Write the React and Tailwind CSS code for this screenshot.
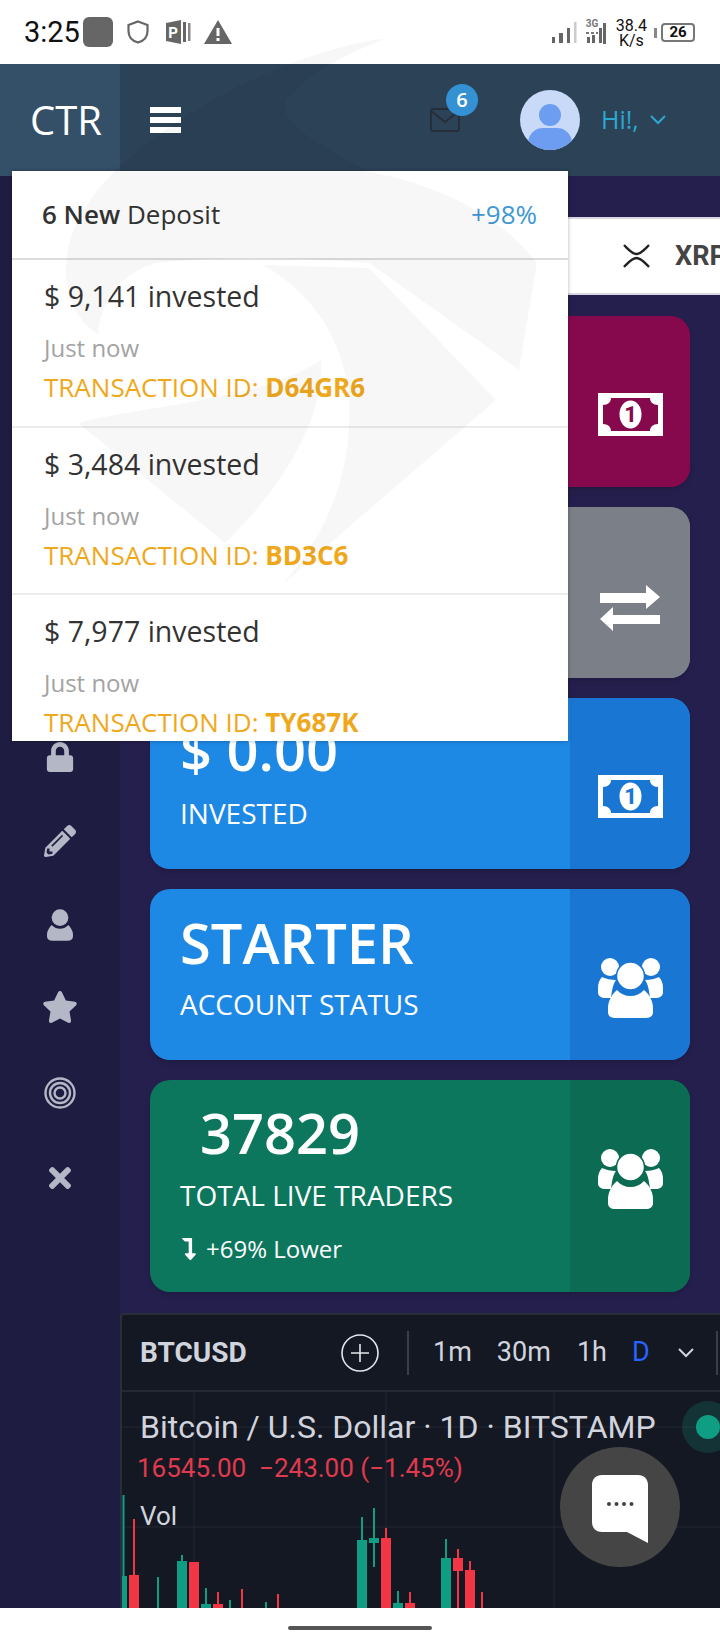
import React from 'react';
import { FaLock, FaPencilAlt, FaStar, FaTimes, FaLevelDownAlt } from 'react-icons/fa';

const openSans = "font-['Open_Sans',sans-serif]";
const roboto = "font-['Roboto',sans-serif]";

// Banknote with a centred "1", cut out in the panel colour
function Money({ fill }) {
  return (
    <svg width="65" height="43" viewBox="0 0 65 43">
      <rect width="65" height="43" fill="#fff" />
      <path d="M13 5H52C52 9 55 12 60 12V31C55 31 52 34 52 38H13C13 34 10 31 5 31V12C10 12 13 9 13 5Z" fill={fill} />
      <ellipse cx="32.5" cy="21.5" rx="11" ry="14" fill="#fff" />
      <text x="32.5" y="29" textAnchor="middle" fontSize="22" fontWeight="800" fontFamily="Roboto, sans-serif" fill={fill}>1</text>
    </svg>
  );
}

// Two opposed arrows for the exchange tile
function Exchange() {
  return (
    <svg width="60" height="46" viewBox="0 0 60 46" fill="#fff">
      <path d="M0 8H46V0L60 12L46 24V18H0Z" />
      <path d="M60 30V39H13V46L0 34L13 22V30Z" />
    </svg>
  );
}

// Group of three people, the front one outlined to stand off from the others
function Users({ fill }) {
  return (
    <svg width="65" height="60" viewBox="0 0 65 60" fill="#fff">
      <circle cx="12" cy="9" r="9" />
      <circle cx="53" cy="9" r="9" />
      <path d="M4 19C1 22 0 26 0 30V34C0 38 3 40 8 40H13C14 32 15 26 18 22C13 22 8 21 4 19Z" />
      <path d="M61 19C64 22 65 26 65 30V34C65 38 62 40 57 40H52C51 32 50 26 47 22C52 22 57 21 61 19Z" />
      <circle cx="32.5" cy="18" r="14" stroke={fill} strokeWidth="1.5" />
      <path d="M19 32C13 37 10 44 10 50V54C10 58 13 60 17 60H48C52 60 55 58 55 54V50C55 44 52 37 46 32C42 36 38 38 32.5 38S23 36 19 32Z" />
    </svg>
  );
}

function StatCard({ bg, panel, h, iconTop, children, icon }) {
  return (
    <div className={`flex w-[540px] ${h} ${bg} rounded-[20px] overflow-hidden shadow-md shrink-0`}>
      <div className={`w-[420px] shrink-0 relative text-white ${openSans}`}>{children}</div>
      <div className={`flex-1 flex justify-center ${panel} ${iconTop}`}>{icon}</div>
    </div>
  );
}

const deposits = [
  { amount: '$ 9,141 invested', id: 'D64GR6' },
  { amount: '$ 3,484 invested', id: 'BD3C6' },
  { amount: '$ 7,977 invested', id: 'TY687K' },
];

// Volume-style candles: [x, width, top of body, top of wick, colour, bottom of body, bottom of wick]
const G = '#0f9e83';
const R = '#f23645';
const candles = [
  [120, 7, 1576, 1495, G], [129, 10, 1575, 1519, R], [157, 0, 1577, 1577, G],
  [177, 10, 1561, 1555, G], [189, 10, 1562, 1562, R], [201, 10, 1604, 1588, G],
  [213, 10, 1604, 1592, R], [229, 0, 1600, 1600, G], [241, 0, 1589, 1589, R],
  [265, 0, 1602, 1602, G], [277, 0, 1594, 1594, R], [357, 10, 1540, 1517, G],
  [369, 10, 1538, 1508, G, 1543, 1567], [381, 10, 1538, 1528, R], [393, 10, 1603, 1591, G],
  [405, 10, 1603, 1592, R], [441, 10, 1558, 1539, G], [453, 10, 1558, 1549, R, 1571, 1608],
  [465, 10, 1570, 1561, R], [481, 0, 1592, 1592, R],
];

function ChartPlot() {
  return (
    <svg className="absolute inset-0" width="598" height="216" viewBox="122 1392 598 216">
      <g stroke="#232733" strokeWidth="1">
        <path d="M194 1392V1608M386 1392V1608M554 1392V1608M122 1427H720M122 1527H720" />
      </g>
      {candles.map(([x, w, top, wick, color, bodyEnd = 1608, wickEnd], i) =>
        w === 0 ? (
          <rect key={i} x={x} y={top} width="2" height={1608 - top} fill={color} />
        ) : (
          <g key={i} fill={color}>
            <rect x={x + w / 2 - 1} y={wick} width="2" height={(wickEnd ?? bodyEnd) - wick} />
            <rect x={x} y={top} width={w} height={bodyEnd - top} />
          </g>
        )
      )}
    </svg>
  );
}

function StatusBar() {
  return (
    <div className="h-16 shrink-0 bg-white flex items-center relative">
      <span className={`${roboto} text-[29px] leading-none text-[#111] ml-[24px]`}>3:25</span>
      <div className="w-[30px] h-[30px] rounded-[6px] bg-[#666] ml-[3px]" />
      <svg className="ml-[14px]" width="22" height="24" viewBox="0 0 22 24" fill="none" stroke="#666" strokeWidth="2.2">
        <path d="M11 1.5L20.5 5V11C20.5 17 16.5 21 11 22.5C5.500 21 1.500 17 1.500 11V5Z" />
      </svg>
      <svg className="ml-[17px]" width="25" height="24" viewBox="0 0 25 24">
        <path d="M0 3L15 0V24L0 21Z" fill="#666" />
        <rect x="17" y="2" width="3" height="20" fill="#666" />
        <rect x="22" y="3" width="2.5" height="18" fill="#888" />
        <text x="7" y="18" textAnchor="middle" fontSize="15" fontWeight="700" fontFamily="Roboto, sans-serif" fill="#fff">P</text>
      </svg>
      <svg className="ml-[13px]" width="28" height="24" viewBox="0 0 28 24">
        <path d="M14 0L28 24H0Z" fill="#666" />
        <rect x="12.5" y="8" width="3" height="8" fill="#fff" />
        <rect x="12.5" y="18" width="3" height="3" fill="#fff" />
      </svg>
      <div className="ml-auto flex items-end h-[30px] mr-[25px]">
        <svg width="52" height="28" viewBox="0 0 52 28" className="mb-[3px]">
          <g fill="#666">
            <rect x="2" y="21" width="3" height="6" />
            <rect x="9" y="17" width="4" height="10" />
            <rect x="17" y="12" width="3" height="15" />
          </g>
          <rect x="24" y="6" width="2.5" height="21" fill="#ccc" />
          <text x="42" y="11" textAnchor="middle" fontSize="10" fontWeight="700" fontFamily="Roboto, sans-serif" fill="#777">3G</text>
          <path d="M36 17H48" stroke="#777" strokeWidth="2" strokeDasharray="3 2" />
          <g fill="#666">
            <rect x="37" y="21" width="3" height="6" />
            <rect x="42" y="19" width="3" height="8" />
            <rect x="49" y="12" width="3" height="15" />
          </g>
        </svg>
        <div className="w-[3px] h-[21px] bg-[#666] mb-[3px] mr-[10px] ml-[1px]" />
        <div className={`${roboto} text-[16px] leading-[15px] text-[#111] text-center mb-[-1px]`}>
          <div>38.4</div>
          <div>K/s</div>
        </div>
        <div className="w-[3px] h-[10px] bg-[#888] ml-[7px] mb-[9px]" />
        <div className={`${roboto} w-[34px] h-[19px] border-2 border-[#777] rounded-[4px] ml-[4px] mb-[5px] flex items-center justify-center text-[15px] font-bold text-[#111] leading-none`}>
          26
        </div>
      </div>
    </div>
  );
}

function Header() {
  return (
    <div className="h-28 shrink-0 flex bg-[#2c4257]">
      <div className={`w-[120px] bg-[#344f68] flex items-center justify-center pl-[12px] text-white text-[40px] ${openSans}`}>CTR</div>
      <div className="flex-1 flex items-center">
        <div className="ml-[30px] w-[31px] flex flex-col gap-[4px]">
          <div className="h-[6px] bg-white" />
          <div className="h-[6px] bg-white" />
          <div className="h-[6px] bg-white" />
        </div>
        <div className="ml-[249px] relative w-[30px] h-[24px]">
          <svg width="30" height="24" viewBox="0 0 30 24" fill="none" stroke="#262e3a" strokeWidth="2">
            <rect x="1" y="1" width="28" height="22" rx="2" />
            <path d="M1 3L15 14L29 3" />
          </svg>
          <div className={`absolute left-[16px] top-[-24px] w-8 h-8 rounded-full bg-[#3391d4] text-white font-semibold text-[20px] flex items-center justify-center ${openSans}`}>6</div>
        </div>
        <div className="ml-[60px] w-[60px] h-[60px] rounded-full bg-[#c9d9f8] overflow-hidden relative flex justify-center">
          <div className="w-[22px] h-[22px] rounded-full bg-[#6d9df0] mt-[14px]" />
          <div className="absolute top-[38px] w-[44px] h-[30px] rounded-full bg-[#6d9df0]" />
        </div>
        <span className={`ml-[21px] text-[25px] text-[#2ba8d0] ${openSans}`}>Hi!,</span>
        <svg className="ml-[11px]" width="16" height="10" viewBox="0 0 16 10" fill="none" stroke="#2ba8d0" strokeWidth="2">
          <path d="M1 1L8 8L15 1" />
        </svg>
      </div>
    </div>
  );
}

function Sidebar() {
  return (
    <div className="w-[120px] shrink-0 bg-[#1f1c41] flex flex-col items-center text-[#b4b8c6] pt-[565px]">
      <div className="h-[32px] flex items-center"><FaLock size={30} /></div>
      <div className="h-[32px] mt-[52px] flex items-center"><FaPencilAlt size={32} /></div>
      <div className="h-[32px] mt-[52px] flex items-center">
        <svg width="26" height="32" viewBox="0 0 28 34" fill="currentColor">
          <circle cx="14" cy="9" r="9" />
          <path d="M5 17C2 20 0 24 0 27V29C0 32 2 34 6 34H22C26 34 28 32 28 29V27C28 24 26 20 23 17C20 20 17 21 14 21S8 20 5 17Z" />
        </svg>
      </div>
      <div className="h-[32px] mt-[50px] flex items-center"><FaStar size={36} /></div>
      <div className="h-[32px] mt-[54px] flex items-center">
        <svg width="32" height="32" viewBox="0 0 32 32" fill="none" stroke="currentColor" strokeWidth="2.4">
          <circle cx="16" cy="16" r="14.500" />
          <circle cx="16" cy="16" r="10" />
          <circle cx="16" cy="16" r="5.500" />
        </svg>
      </div>
      <div className="h-[32px] mt-[53px] flex items-center"><FaTimes size={32} /></div>
    </div>
  );
}

function Ticker() {
  return (
    <div className={`ml-[30px] h-[78px] shrink-0 bg-white border-y-2 border-[#d9d8e2] flex items-center overflow-hidden ${roboto}`}>
      <svg className="ml-[473px] shrink-0" width="27" height="24" viewBox="0 0 27 24" fill="none" stroke="#222" strokeWidth="2.4">
        <path d="M1 1C6 6 9 10 13.500 10S21 6 26 1M1 23C6 18 9 14 13.500 14S21 18 26 23" />
      </svg>
      <span className="ml-[25px] text-[27px] font-bold text-[#444] whitespace-nowrap">XRP</span>
    </div>
  );
}

function Chart() {
  return (
    <div className={`h-full bg-[#141823] border-t-2 border-l-2 border-[#2a2e39] rounded-tl-[4px] flex flex-col ${roboto}`}>
      <div className="h-[77px] shrink-0 border-b-2 border-[#242833] flex items-center text-[27px] text-[#d1d4dc]">
        <span className="ml-[18px] w-[201px] font-bold text-[28px]">BTCUSD</span>
        <svg width="38" height="38" viewBox="0 0 38 38" fill="none" stroke="#e3e5eb" strokeWidth="1.6">
          <circle cx="19" cy="19" r="18" />
          <path d="M19 10V28M10 19H28" />
        </svg>
        <div className="w-[2px] h-[44px] bg-[#3a3e49] ml-[28px]" />
        <span className="ml-[24px]">1m</span>
        <span className="ml-[25px]">30m</span>
        <span className="ml-[26px]">1h</span>
        <span className="ml-[25px] text-[#2962ff]">D</span>
        <svg className="ml-[28px]" width="16" height="10" viewBox="0 0 16 10" fill="none" stroke="#d1d4dc" strokeWidth="2">
          <path d="M1 1L8 8L15 1" />
        </svg>
        <div className="w-[2px] h-[44px] bg-[#3a3e49] ml-[22px]" />
      </div>
      <div className="flex-1 relative overflow-hidden">
        <ChartPlot />
        <div className="absolute left-[18px] top-[16px] text-[32px] leading-[38px] text-[#d1d4dc] whitespace-nowrap">Bitcoin / U.S. Dollar · 1D · BITSTAMP</div>
        <div className="absolute left-[15px] top-[60px] text-[26px] leading-[32px] text-[#e03a4e] whitespace-nowrap">16545.00&nbsp; −243.00 (−1.45%)</div>
        <div className="absolute left-[18px] top-[108px] text-[26px] leading-[32px] text-[#d1d4dc]">Vol</div>
        <div className="absolute left-[560px] top-[9px] w-[52px] h-[52px] rounded-full bg-[#0f9e83]/20 flex items-center justify-center">
          <div className="w-[24px] h-[24px] rounded-full bg-[#0f9e83]" />
        </div>
      </div>
    </div>
  );
}

function DepositMenu() {
  return (
    <div className={`absolute left-3 top-[171px] w-[556px] h-[570px] bg-white overflow-hidden shadow-[0_0_4px_rgba(0,0,0,0.3)] ${openSans}`}>
      <div className="h-[89px] border-b-2 border-[#dcdcdc] flex items-center justify-between pl-[30px] pr-[31px] text-[26px] text-[#333]">
        <span><b className="font-semibold">6 New</b> Deposit</span>
        <span className="text-[#3f97d3]">+98%</span>
      </div>
      {deposits.map((d, i) => (
        <div key={d.id} className={`h-[167.5px] pl-[32px] pt-[16px] ${i < 2 ? 'border-b-2 border-[#ececec]' : ''}`}>
          <div className="text-[28.5px] leading-[40px] font-medium text-[#333]">{d.amount}</div>
          <div className="text-[24px] leading-[34px] mt-[15px] text-[#a3a3a3]">Just now</div>
          <div className="text-[26px] leading-[38px] mt-[3px] text-[#efa81c] whitespace-nowrap">
            TRANSACTION ID: <b className="font-bold">{d.id}</b>
          </div>
        </div>
      ))}
    </div>
  );
}

// Faint brand mark laid over the page
function Watermark() {
  return (
    <svg className="absolute inset-0 pointer-events-none" width="720" height="760" viewBox="0 0 720 760" fill="#000" fillOpacity="0.03">
      <path d="M387 38C300 50 190 100 116 170C75 210 60 250 68 290C72 312 85 325 98 335C100 300 120 275 155 263C230 255 300 258 369 263L519 370L537 263C500 215 440 185 369 172C330 150 290 130 285 110C283 90 330 60 387 38Z" />
      <path d="M78 423C150 405 260 400 321 360C325 420 280 490 225 543Z" />
      <path d="M262 265L369 268L496 400L282 585C330 530 352 470 349 400C345 340 310 290 262 265Z" />
    </svg>
  );
}

function ChatButton() {
  return (
    <div className="absolute left-[560px] top-[1447px] w-[120px] h-[120px] rounded-full bg-[#454545] flex items-center justify-center">
      <svg width="56" height="68" viewBox="0 0 56 68" className="mt-[4px]">
        <path d="M10 0H46C52 0 56 4 56 10V68L35 57H10C4 57 0 53 0 47V10C0 4 4 0 10 0Z" fill="#fff" />
        <g fill="#444">
          <circle cx="17" cy="29" r="2" />
          <circle cx="24.500" cy="29" r="2" />
          <circle cx="32" cy="29" r="2" />
          <circle cx="39.500" cy="29" r="2" />
        </g>
      </svg>
    </div>
  );
}

export default function App() {
  return (
    <div className="relative w-[720px] h-[1640px] overflow-hidden bg-white flex flex-col">
      <StatusBar />
      <Header />
      <div className="flex-1 min-h-0 flex bg-[#251f4d]">
        <Sidebar />
        <div className="flex-1 min-w-0 flex flex-col pt-[41px]">
          <Ticker />
          <div className="ml-[30px] mt-[21px] flex flex-col gap-[20px]">
            <StatCard bg="bg-[#86094d]" panel="bg-[#86094d]" h="h-[171px]" iconTop="pt-[77px]" icon={<Money fill="#86094d" />} />
            <StatCard bg="bg-[#7b7f87]" panel="bg-[#7b7f87]" h="h-[171px]" iconTop="pt-[78px]" icon={<Exchange />} />
            <StatCard bg="bg-[#1e88e5]" panel="bg-[#1976d2]" h="h-[171px]" iconTop="pt-[77px]" icon={<Money fill="#1976d2" />}>
              <div className="absolute left-[30px] top-[16px] text-[56px] leading-[70px] font-semibold">$ 0.00</div>
              <div className="absolute left-[30px] top-[97px] text-[28px] leading-[36px]">INVESTED</div>
            </StatCard>
            <StatCard bg="bg-[#1e88e5]" panel="bg-[#1976d2]" h="h-[171px]" iconTop="pt-[69px]" icon={<Users fill="#1976d2" />}>
              <div className="absolute left-[30px] top-[18px] text-[56px] leading-[70px] font-semibold">STARTER</div>
              <div className="absolute left-[30px] top-[97px] text-[28px] leading-[36px]">ACCOUNT STATUS</div>
            </StatCard>
            <StatCard bg="bg-[#0c775c]" panel="bg-[#0b6b53]" h="h-[212px]" iconTop="pt-[69px]" icon={<Users fill="#0b6b53" />}>
              <div className="absolute left-[50px] top-[17px] text-[56px] leading-[70px] font-semibold">37829</div>
              <div className="absolute left-[30px] top-[97px] text-[28px] leading-[36px]">TOTAL LIVE TRADERS</div>
              <div className="absolute left-[28px] top-[154px] flex items-center text-[24px] leading-[30px]">
                <FaLevelDownAlt size={22} />
                <span className="ml-[6px]">+69% Lower</span>
              </div>
            </StatCard>
          </div>
          <div className="h-[295px] mt-[21px] shrink-0">
            <Chart />
          </div>
        </div>
      </div>
      <div className="h-8 shrink-0 bg-white flex justify-center pt-[18px]">
        <div className="w-[144px] h-[4px] rounded-full bg-[#555]" />
      </div>
      <DepositMenu />
      <ChatButton />
      <Watermark />
    </div>
  );
}
